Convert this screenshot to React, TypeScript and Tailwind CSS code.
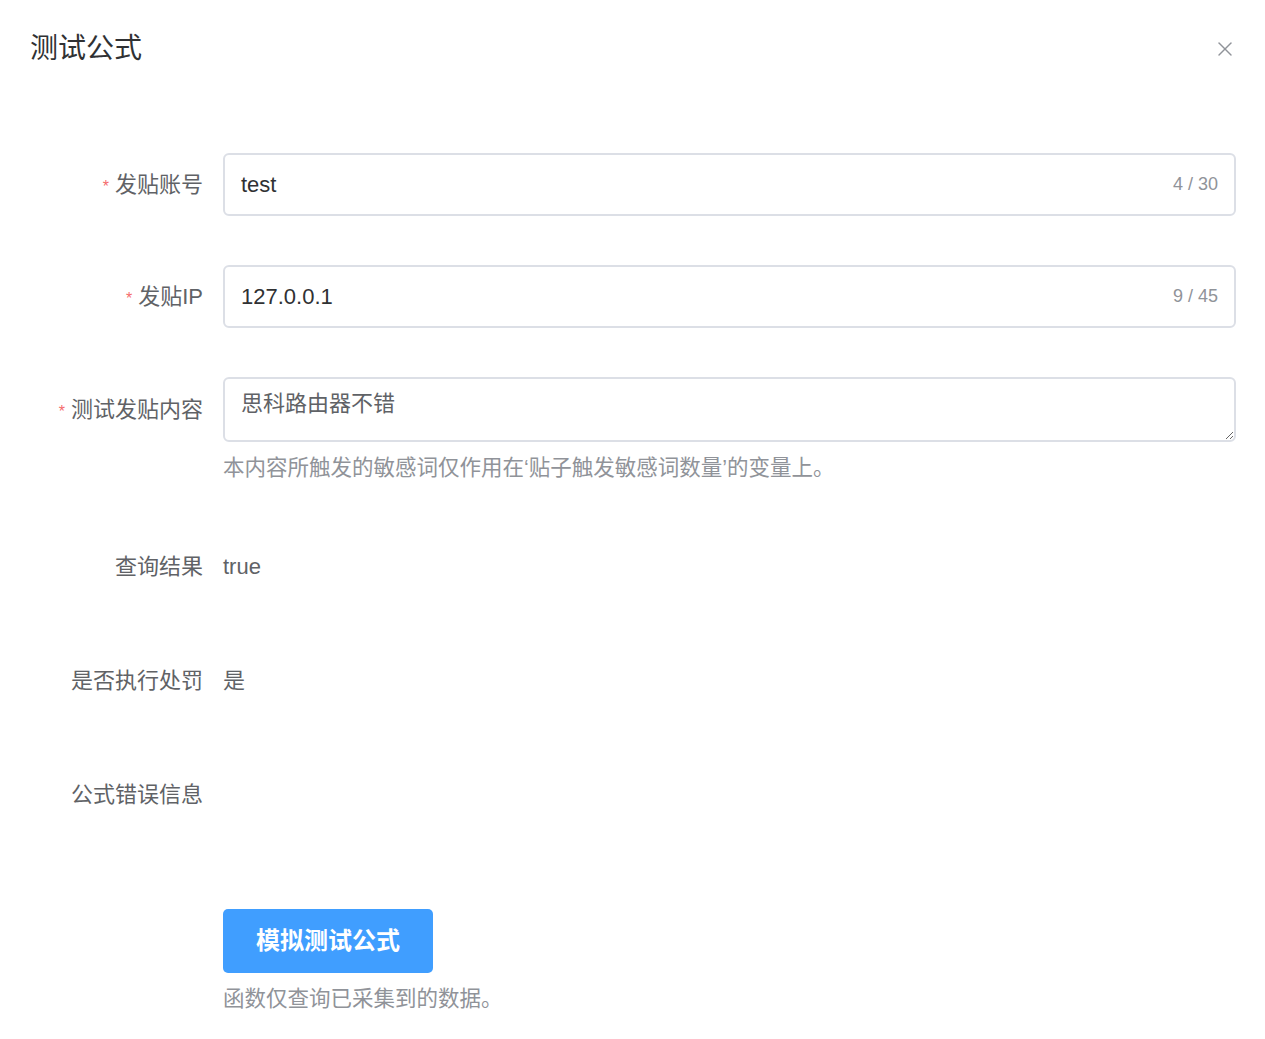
import { X } from 'lucide-react'

const font = { fontFamily: '"Liberation Sans", "Noto Sans CJK SC", sans-serif' }

function Label({ text, required }: { text: string; required?: boolean }) {
  return (
    <div className="w-[223px] shrink-0 pr-[20px] text-right text-[22px] text-[#606266]">
      {required && <span className="mr-[6px] text-[16px] text-[#f56c6c]">*</span>}
      {text}
    </div>
  )
}

function CountInput({ value, max }: { value: string; max: number }) {
  return (
    <div className="flex h-[63px] flex-1 items-center rounded-[6px] border-2 border-[#dcdfe6] px-[16px]">
      <span className="flex-1 text-[22px] text-[#303133]">{value}</span>
      <span className="text-[18px] text-[#909399]">
        {value.length} / {max}
      </span>
    </div>
  )
}

export default function App() {
  return (
    <div className="h-[1039px] w-[1265px] bg-white text-[#606266]" style={font}>
      <div className="flex items-center justify-between pl-[30px] pr-[28px] pt-[28px]">
        <h2 className="text-[28px] text-[#303133]">测试公式</h2>
        <X size={24} strokeWidth={1.4} className="text-[#909399]" />
      </div>

      <div className="pr-[29px] pt-[83px]">
        <div className="flex items-center">
          <Label text="发贴账号" required />
          <CountInput value="test" max={30} />
        </div>

        <div className="mt-[49px] flex items-center">
          <Label text="发贴IP" required />
          <CountInput value="127.0.0.1" max={45} />
        </div>

        <div className="mt-[49px] flex items-start">
          <div className="pt-[16px]">
            <Label text="测试发贴内容" required />
          </div>
          <div className="flex-1">
            <textarea
              readOnly
              defaultValue="思科路由器不错"
              className="block h-[65px] w-full rounded-[6px] border-2 border-[#dcdfe6] px-[16px] py-[8px] text-[22px] text-[#606266] outline-none"
              style={font}
            />
            <p className="mt-[10px] text-[21.5px] text-[#909399]">
              本内容所触发的敏感词仅作用在‘贴子触发敏感词数量’的变量上。
            </p>
          </div>
        </div>

        <div className="mt-[66px] flex items-center">
          <Label text="查询结果" />
          <span className="text-[22px] text-[#606266]">true</span>
        </div>

        <div className="mt-[81px] flex items-center">
          <Label text="是否执行处罚" />
          <span className="text-[22px] text-[#606266]">是</span>
        </div>

        <div className="mt-[81px] flex items-center">
          <Label text="公式错误信息" />
        </div>

        <div className="mt-[98px] flex">
          <div className="w-[223px] shrink-0" />
          <div>
            <button className="h-[64px] w-[210px] rounded-[5px] bg-[#409eff] text-[24px] font-bold text-white">
              模拟测试公式
            </button>
            <p className="mt-[10px] text-[21.5px] text-[#909399]">函数仅查询已采集到的数据。</p>
          </div>
        </div>
      </div>
    </div>
  )
}
